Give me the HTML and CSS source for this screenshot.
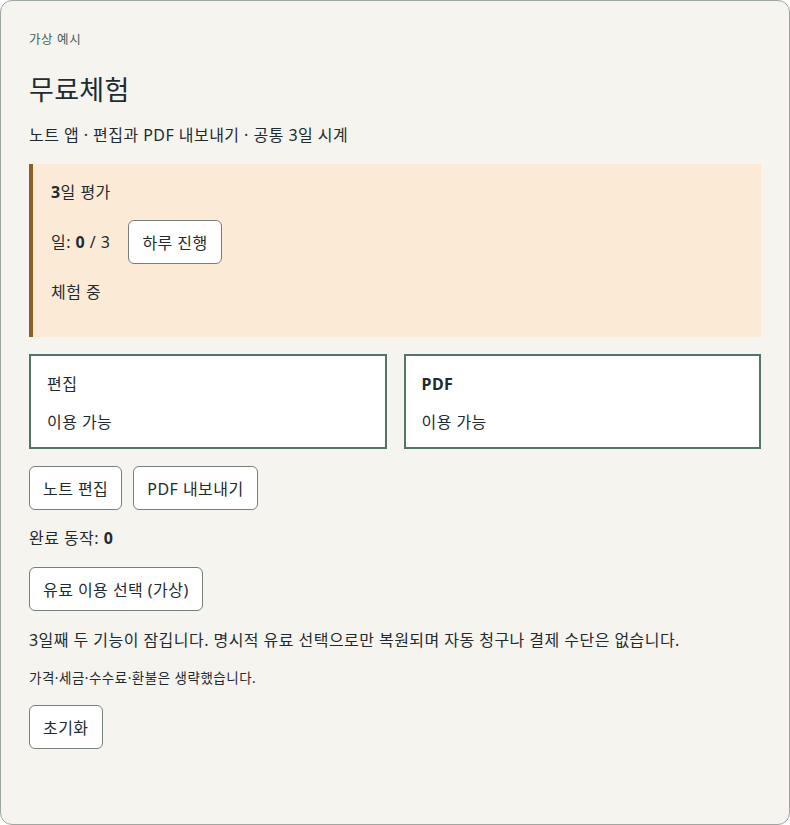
FILE: index.html
```html
<!DOCTYPE html>
<html lang="ko">
	<head>
		<meta charset="UTF-8" />
		<meta name="viewport" content="width=device-width, initial-scale=1.0" />
		<title>무료체험</title>
		<link rel="stylesheet" href="styles.css">
	</head>
	<body>
		<main class="page">
			<header class="head">
				<p class="eyebrow">가상 예시</p>
				<h1>무료체험</h1>
				<p class="sub">노트 앱 · 편집과 PDF 내보내기 · 공통 3일 시계</p>
			</header>

			<section class="trial">
				<p><strong>3</strong>일 평가</p>
				<p class="day-row">
					<span>일: <strong>0</strong> / 3</span>
					<button class="btn">하루 진행</button>
				</p>
				<p>체험 중</p>
			</section>

			<div class="features">
				<div class="feature">
					<p>편집</p>
					<p>이용 가능</p>
				</div>
				<div class="feature">
					<p><strong>PDF</strong></p>
					<p>이용 가능</p>
				</div>
			</div>

			<div class="actions">
				<button class="btn">노트 편집</button>
				<button class="btn">PDF 내보내기</button>
			</div>

			<p class="done">완료 동작: <strong>0</strong></p>

			<div>
				<button class="btn">유료 이용 선택 (가상)</button>
			</div>

			<p>3일째 두 기능이 잠깁니다. 명시적 유료 선택으로만 복원되며 자동 청구나 결제 수단은 없습니다.</p>

			<p class="note">가격·세금·수수료·환불은 생략했습니다.</p>

			<div>
				<button class="btn">초기화</button>
			</div>
		</main>
	</body>
</html>
```

FILE: styles.css
```css
* {
	margin: 0;
	padding: 0;
	box-sizing: border-box;
}

body {
	background-color: #ffffff;
	font-family: 'Noto Sans', 'Noto Sans CJK KR', sans-serif;
	font-size: 16px;
	letter-spacing: 0.45px;
	line-height: 24px;
	color: #1e2b31;
}

.page {
	min-height: 100vh;
	background-color: #f6f4ef;
	border: 1px solid #9ea7a3;
	border-radius: 12px;
	padding: 30px 28px 40px;
	display: flex;
	flex-direction: column;
	gap: 17px;
}

.eyebrow {
	font-size: 12.5px;
	letter-spacing: 0.6px;
	line-height: 18px;
	color: #3e5f57;
}
h1 {
	margin-top: 23px;
	font-size: 27px;
	letter-spacing: 0.3px;
	line-height: 36px;
	font-weight: 400;
}
.sub {
	margin-top: 15px;
}

.trial {
	background-color: #fbebd6;
	border-left: 4px solid #8f5e24;
	padding: 16px 18px 33px;
	display: flex;
	flex-direction: column;
	gap: 16px;
}
.day-row {
	display: flex;
	align-items: center;
	gap: 18px;
}

.features {
	display: grid;
	grid-template-columns: 1fr 1fr;
	gap: 17px;
}
.feature {
	background-color: #ffffff;
	border: 2px solid #537569;
	padding: 16px 16px 13px;
	display: flex;
	flex-direction: column;
	gap: 14px;
}

.actions {
	display: flex;
	gap: 11px;
}

.btn {
	height: 44px;
	padding: 0 13px;
	font-family: inherit;
	font-size: 16px;
	letter-spacing: 0.45px;
	color: #1e2b31;
	background-color: #ffffff;
	border: 1px solid #75807c;
	border-radius: 6px;
	cursor: pointer;
}

.done {
	margin-top: -1px;
}

.note {
	margin-top: -1px;
	font-size: 13.5px;
	letter-spacing: 0.5px;
	line-height: 20px;
}
```
